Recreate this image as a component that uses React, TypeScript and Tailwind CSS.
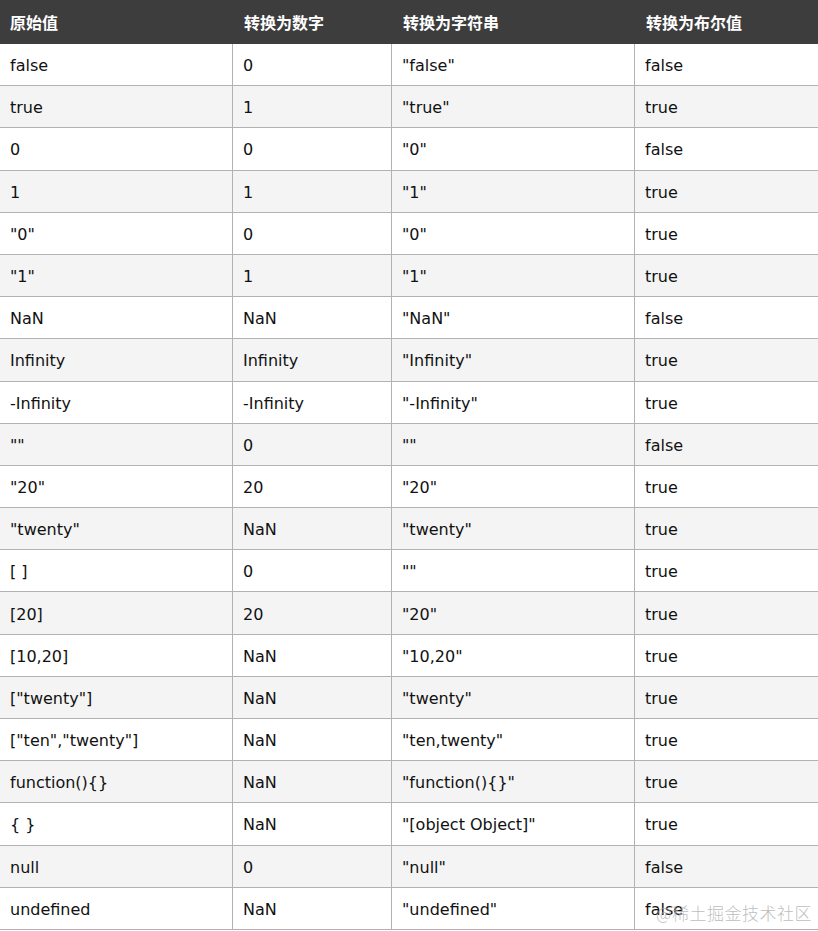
const rows: [string, string, string, string][] = [
  ['false', '0', '"false"', 'false'],
  ['true', '1', '"true"', 'true'],
  ['0', '0', '"0"', 'false'],
  ['1', '1', '"1"', 'true'],
  ['"0"', '0', '"0"', 'true'],
  ['"1"', '1', '"1"', 'true'],
  ['NaN', 'NaN', '"NaN"', 'false'],
  ['Infinity', 'Infinity', '"Infinity"', 'true'],
  ['-Infinity', '-Infinity', '"-Infinity"', 'true'],
  ['""', '0', '""', 'false'],
  ['"20"', '20', '"20"', 'true'],
  ['"twenty"', 'NaN', '"twenty"', 'true'],
  ['[ ]', '0', '""', 'true'],
  ['[20]', '20', '"20"', 'true'],
  ['[10,20]', 'NaN', '"10,20"', 'true'],
  ['["twenty"]', 'NaN', '"twenty"', 'true'],
  ['["ten","twenty"]', 'NaN', '"ten,twenty"', 'true'],
  ['function(){}', 'NaN', '"function(){}"', 'true'],
  ['{ }', 'NaN', '"[object Object]"', 'true'],
  ['null', '0', '"null"', 'false'],
  ['undefined', 'NaN', '"undefined"', 'false'],
];

const headers = ['原始值', '转换为数字', '转换为字符串', '转换为布尔值'];
const cols = 'grid grid-cols-[233px_159px_243px_183px]';

export default function App() {
  return (
    <div className="relative w-[818px] h-[931px] overflow-hidden bg-white font-['DejaVu_Sans','Noto_Sans_CJK_SC',sans-serif] text-[16px] text-[#111]">
      {/* header */}
      <div className={`${cols} h-[44px] bg-[#3d3d3d] text-white font-bold font-['Noto_Sans_CJK_SC',sans-serif]`}>
        {headers.map((h) => (
          <div key={h} className="flex items-center pl-[10px] [&:not(:first-child)]:pl-[11px]">
            {h}
          </div>
        ))}
      </div>
      {rows.map((r, i) => (
        <div
          key={i}
          className={`${cols} h-[42.2px] border-b border-[#b2b2b2] last:border-b-0 ${i % 2 === 1 ? 'bg-[#f4f4f4]' : 'bg-white'}`}
        >
          {r.map((c, j) => (
            <div
              key={j}
              className={`flex items-center pl-[10px] pt-[3px] ${j < 3 ? 'border-r border-[#b2b2b2]' : ''}`}
            >
              {c}
            </div>
          ))}
        </div>
      ))}
      {/* watermark */}
      <div className="absolute right-[6px] bottom-[7px] text-[17px] leading-[22px] tracking-[0.5px] text-[#a8a8a8]/75 font-['Noto_Sans_CJK_SC',sans-serif] font-light">
        @稀土掘金技术社区
      </div>
    </div>
  );
}
